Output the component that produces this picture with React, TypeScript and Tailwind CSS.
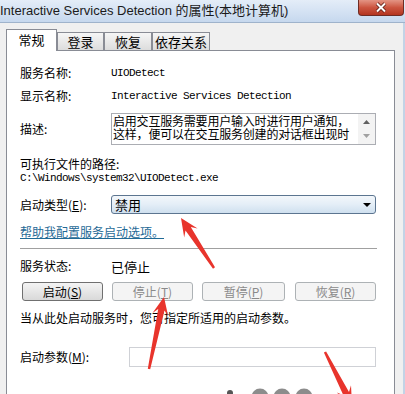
import React from "react";

const mono = "font-['Liberation_Mono',monospace] text-[11px] tracking-[-0.6px]";

function arrowPoints(
  tx: number,
  ty: number,
  bx: number,
  by: number,
  hl = 18,
  hw = 8,
  sw = 3.2,
  tw = 1.2
) {
  const dx = tx - bx;
  const dy = ty - by;
  const len = Math.hypot(dx, dy);
  const ux = dx / len;
  const uy = dy / len;
  const nx = -uy;
  const ny = ux;
  const p = (along: number, side: number) => [
    tx - ux * along + nx * side,
    ty - uy * along + ny * side,
  ];
  const pts = [
    p(0, 0),
    p(hl, hw),
    p(hl - 5, sw),
    [bx + nx * tw, by + ny * tw],
    [bx - nx * tw, by - ny * tw],
    p(hl - 5, -sw),
    p(hl, -hw),
  ];
  return pts.map((q) => q.map((v) => v.toFixed(1)).join(",")).join(" ");
}

const Tab = ({ label, active, w }: { label: string; active?: boolean; w: string }) => (
  <div
    className={
      active
        ? `relative z-10 -mb-px h-[22px] ${w} border border-b-0 border-[#898c95] bg-white flex items-start justify-center pt-[2px] text-[13px] leading-[16px]`
        : `h-[18px] ${w} border border-b-0 border-[#898c95] bg-gradient-to-b from-[#f6f6f6] to-[#dcdcdc] flex items-start justify-center pt-[1px] text-[13px] leading-[16px]`
    }
  >
    {label}
  </div>
);

const WinButton = ({
  children,
  disabled,
  w,
}: {
  children: React.ReactNode;
  disabled?: boolean;
  w: string;
}) => (
  <div
    className={
      disabled
        ? `${w} h-[19px] rounded-[3px] border border-[#adb2b5] bg-[#f4f4f4] text-[#8a8a8a] flex items-center justify-center leading-none`
        : `${w} h-[19px] rounded-[3px] border border-[#707070] bg-gradient-to-b from-[#f4f4f4] to-[#d9d9d9] text-black flex items-center justify-center leading-none`
    }
  >
    {children}
  </div>
);

export default function App() {
  return (
    <div className="relative w-[405px] h-[394px] overflow-hidden bg-[#f0f0f0] font-['Noto_Sans_CJK_SC',sans-serif] text-[12px] text-black">
      {/* title bar */}
      <div className="h-[23px] flex items-start bg-gradient-to-b from-[#e4edf8] to-[#c6d8ee] border-b border-[#9fb3cb]">
        <div className="pt-[3px] font-['Liberation_Sans','Noto_Sans_CJK_SC',sans-serif] text-[13px] leading-[16px] text-[#1b1b1b] whitespace-nowrap">
          Interactive Services Detection 的属性(本地计算机)
        </div>
        <div className="ml-auto mr-[1px] w-[46px] h-[16px] rounded-b-[4px] border border-t-0 border-[#6e2c24] bg-gradient-to-b from-[#e39484] via-[#cc5540] to-[#b3341f] flex items-center justify-center">
          <svg width="12" height="11" viewBox="0 0 12 11">
            <path d="M2 1.5 L10 9.5 M10 1.5 L2 9.5" stroke="#5a1a12" strokeWidth="3.6" />
            <path d="M2 1.5 L10 9.5 M10 1.5 L2 9.5" stroke="#ffffff" strokeWidth="2" />
          </svg>
        </div>
      </div>

      {/* body */}
      <div className="pl-[6px] pr-[8px] border-r-2 border-[#c3d3e6] h-[371px]">
        <div className="h-[27px] flex items-end">
          <Tab label="常规" active w="w-[51px]" />
          <Tab label="登录" w="w-[47px]" />
          <Tab label="恢复" w="w-[48px]" />
          <Tab label="依存关系" w="w-[58px]" />
        </div>

        <div className="border border-[#898c95] bg-white h-[400px] pl-[13px] pr-[18px]">
          <div className="mt-[13px] h-[18px] flex items-center">
            <div className="w-[91px] leading-none">服务名称:</div>
            <div className={mono}>UIODetect</div>
          </div>
          <div className="mt-[5px] h-[18px] flex items-center">
            <div className="w-[91px] leading-none">显示名称:</div>
            <div className={mono}>Interactive Services Detection</div>
          </div>
          <div className="mt-[8px] h-[32px] flex items-center">
            <div className="w-[91px] leading-none">描述:</div>
            <div className="flex-1 h-[32px] border border-[#abadb3] flex">
              <div className="flex-1 pl-[1px] text-[12px] leading-[13px] tracking-[-0.2px] overflow-hidden whitespace-nowrap">
                <div>启用交互服务需要用户输入时进行用户通知，</div>
                <div>这样，便可以在交互服务创建的对话框出现时</div>
              </div>
              <div className="w-[17px] bg-[#f3f3f3] flex flex-col items-center justify-between py-[6px]">
                <svg width="7" height="4" viewBox="0 0 7 4">
                  <path d="M0 4 L3.5 0 L7 4 Z" fill="#606060" />
                </svg>
                <svg width="7" height="4" viewBox="0 0 7 4">
                  <path d="M0 0 L3.5 4 L7 0 Z" fill="#a0a0a0" />
                </svg>
              </div>
            </div>
          </div>
          <div className="mt-[12px] h-[14px] flex items-center leading-none">可执行文件的路径:</div>
          <div className={`h-[14px] flex items-center ${mono}`}>
            C:\Windows\system32\UIODetect.exe
          </div>
          <div className="mt-[10px] h-[19px] flex items-center">
            <div className="w-[91px] leading-none">
              启动类型(<span className="underline">E</span>):
            </div>
            <div className="flex-1 h-[19px] rounded-[3px] border border-[#5c7590] bg-gradient-to-b from-[#f3f7fb] via-[#e4eef7] to-[#cfe0ef] flex items-center pl-[3px] pr-[4px]">
              <span className="text-[13px] leading-none">禁用</span>
              <svg className="ml-auto" width="8" height="4" viewBox="0 0 8 4">
                <path d="M0 0 L8 0 L4 4 Z" fill="#000" />
              </svg>
            </div>
          </div>
          <div className="mt-[10px] h-[16px] flex items-center">
            <span className="text-[#1f6a96] underline leading-none">帮助我配置服务启动选项。</span>
          </div>
          <div className="mt-[8px] h-[2px] border-t border-[#a0a0a0] border-b border-b-white -mr-px" />
          <div className="mt-[8px] h-[16px] flex items-center">
            <div className="w-[91px] leading-none">服务状态:</div>
            <div className="text-[13px] leading-none">已停止</div>
          </div>
          <div className="mt-[8px] h-[19px] flex items-center ml-[2px]">
            <WinButton w="w-[81px]">
              启动(<span className="underline">S</span>)
            </WinButton>
            <div className="ml-[9px]">
              <WinButton w="w-[81px]" disabled>
                停止(<span className="underline">T</span>)
              </WinButton>
            </div>
            <div className="ml-[9px]">
              <WinButton w="w-[83px]" disabled>
                暂停(<span className="underline">P</span>)
              </WinButton>
            </div>
            <div className="ml-[10px]">
              <WinButton w="w-[81px]" disabled>
                恢复(<span className="underline">R</span>)
              </WinButton>
            </div>
          </div>
          <div className="mt-[9px] h-[16px] flex items-center leading-none whitespace-nowrap">
            当从此处启动服务时，您可指定所适用的启动参数。
          </div>
          <div className="mt-[21px] h-[20px] flex items-center">
            <div className="w-[109px] leading-none">
              启动参数(<span className="underline">M</span>):
            </div>
            <div className="flex-1 h-[20px] border border-[#cfd1d6] bg-white" />
          </div>
        </div>
      </div>

      {/* annotations drawn over the screenshot */}
      <svg className="absolute inset-0 pointer-events-none" width="405" height="394">
        <circle cx="230" cy="393" r="3" fill="#555" />
        <circle cx="260" cy="397" r="8.5" fill="#8c8c8c" />
        <circle cx="282" cy="397" r="8.5" fill="#8c8c8c" />
        <circle cx="304" cy="397" r="8.5" fill="#8c8c8c" />
        <polygon points={arrowPoints(181, 218, 214, 268)} fill="#e8342c" />
        <polygon points={arrowPoints(164, 297, 149, 369)} fill="#e8342c" />
        <polygon points={arrowPoints(352, 405, 325, 352)} fill="#e8342c" />
      </svg>
    </div>
  );
}
